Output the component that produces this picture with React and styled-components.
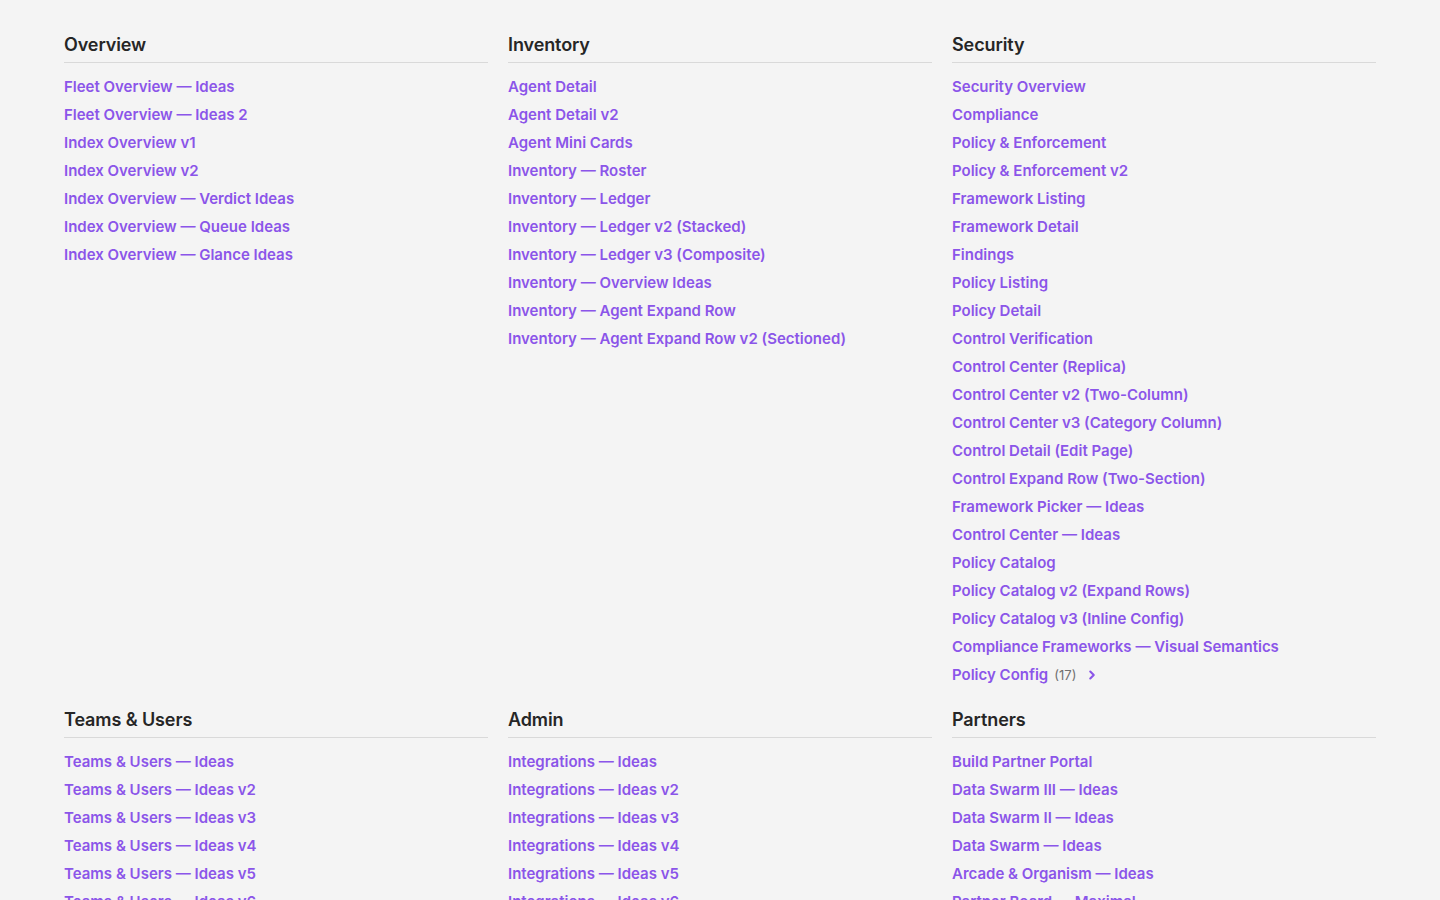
import styled, { createGlobalStyle } from "styled-components";
import { ChevronRight } from "lucide-react";

const GlobalStyle = createGlobalStyle`
  html, body {
    margin: 0;
    padding: 0;
    background: #f4f4f4;
  }
  body {
    font-family: Inter, "Noto Sans", "Liberation Sans", sans-serif;
    -webkit-font-smoothing: antialiased;
  }
`;

const sections = [
  {
    title: "Overview",
    links: [
      "Fleet Overview — Ideas",
      "Fleet Overview — Ideas 2",
      "Index Overview v1",
      "Index Overview v2",
      "Index Overview — Verdict Ideas",
      "Index Overview — Queue Ideas",
      "Index Overview — Glance Ideas",
    ],
  },
  {
    title: "Inventory",
    links: [
      "Agent Detail",
      "Agent Detail v2",
      "Agent Mini Cards",
      "Inventory — Roster",
      "Inventory — Ledger",
      "Inventory — Ledger v2 (Stacked)",
      "Inventory — Ledger v3 (Composite)",
      "Inventory — Overview Ideas",
      "Inventory — Agent Expand Row",
      "Inventory — Agent Expand Row v2 (Sectioned)",
    ],
  },
  {
    title: "Security",
    links: [
      "Security Overview",
      "Compliance",
      "Policy & Enforcement",
      "Policy & Enforcement v2",
      "Framework Listing",
      "Framework Detail",
      "Findings",
      "Policy Listing",
      "Policy Detail",
      "Control Verification",
      "Control Center (Replica)",
      "Control Center v2 (Two-Column)",
      "Control Center v3 (Category Column)",
      "Control Detail (Edit Page)",
      "Control Expand Row (Two-Section)",
      "Framework Picker — Ideas",
      "Control Center — Ideas",
      "Policy Catalog",
      "Policy Catalog v2 (Expand Rows)",
      "Policy Catalog v3 (Inline Config)",
      "Compliance Frameworks — Visual Semantics",
      { label: "Policy Config", count: 17 },
    ],
  },
  {
    title: "Teams & Users",
    links: [
      "Teams & Users — Ideas",
      "Teams & Users — Ideas v2",
      "Teams & Users — Ideas v3",
      "Teams & Users — Ideas v4",
      "Teams & Users — Ideas v5",
      "Teams & Users — Ideas v6",
    ],
  },
  {
    title: "Admin",
    links: [
      "Integrations — Ideas",
      "Integrations — Ideas v2",
      "Integrations — Ideas v3",
      "Integrations — Ideas v4",
      "Integrations — Ideas v5",
      "Integrations — Ideas v6",
    ],
  },
  {
    title: "Partners",
    links: [
      "Build Partner Portal",
      "Data Swarm III — Ideas",
      "Data Swarm II — Ideas",
      "Data Swarm — Ideas",
      "Arcade & Organism — Ideas",
      "Partner Board — Maximal",
    ],
  },
];

function App() {
  return (
    <Page>
      <GlobalStyle />
      <Grid>
        {sections.map((s) => (
          <Section key={s.title}>
            <Heading>{s.title}</Heading>
            <List>
              {s.links.map((l) =>
                typeof l === "string" ? (
                  <li key={l}>
                    <Link href="#">{l}</Link>
                  </li>
                ) : (
                  <li key={l.label}>
                    <Link href="#">{l.label}</Link>
                    <Count>({l.count})</Count>
                    <Chevron size={14} strokeWidth={3.6} />
                  </li>
                )
              )}
            </List>
          </Section>
        ))}
      </Grid>
    </Page>
  );
}

const Page = styled.div`
  padding: 33px 64px 40px;
  min-height: 100vh;
  box-sizing: border-box;
`;

const Grid = styled.div`
  display: grid;
  grid-template-columns: repeat(3, 1fr);
  column-gap: 20px;
  row-gap: 19px;
`;

const Section = styled.section`
  display: flex;
  flex-direction: column;
`;

const Heading = styled.h2`
  margin: 0;
  font-size: 18px;
  line-height: 24px;
  font-weight: 600;
  color: #262626;
  padding-bottom: 5px;
  border-bottom: 1px solid #d9d9d9;
  letter-spacing: -0.1px;
`;

const List = styled.ul`
  list-style: none;
  margin: 10px 0 0;
  padding: 0;

  li {
    display: flex;
    align-items: center;
    height: 28px;
  }
`;

const Link = styled.a`
  font-size: 15px;
  font-weight: 600;
  color: #8b55e9;
  text-decoration: none;
  line-height: 28px;
`;

const Count = styled.span`
  margin-left: 6px;
  font-size: 13px;
  color: #707070;
`;

const Chevron = styled(ChevronRight)`
  margin-left: 9px;
  color: #8b55e9;
`;

export default App;
